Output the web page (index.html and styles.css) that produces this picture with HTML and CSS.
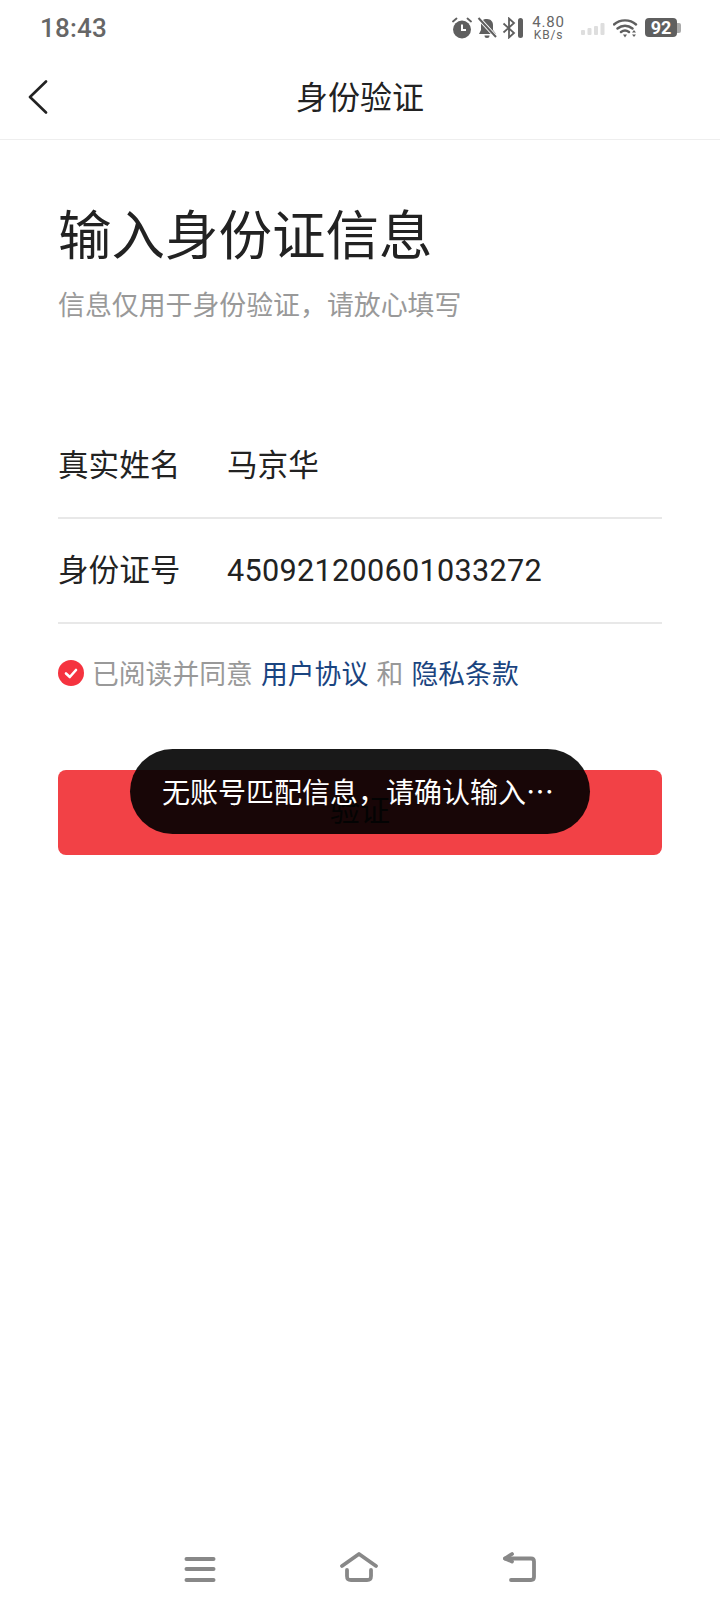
FILE: index.html
```html
<!DOCTYPE html>
<html lang="zh-CN">
<head>
    <meta charset="UTF-8">
    <meta name="viewport" content="width=device-width, initial-scale=1.0">
    <title>身份验证</title>
    <link rel="stylesheet" href="styles.css">
</head>
<body>
    <div class="screen">
        <div class="status-bar">
            <span class="clock">18:43</span>
            <div class="status-icons">
                <svg class="ic-alarm" width="20" height="22" viewBox="0 0 20 22">
                    <circle cx="10" cy="12.500" r="9" fill="#5f5f5f"/>
                    <path d="M1 4.500 4.500 1.500M19 4.500 15.500 1.500" stroke="#5f5f5f" stroke-width="1.800" stroke-linecap="round"/>
                    <path d="M10 7.500V13H14" stroke="#fff" stroke-width="2" fill="none"/>
                </svg>
                <svg class="ic-bell" width="20" height="22" viewBox="0 0 20 22">
                    <path d="M4 6.500C4 4 6 2 10 2c4 0 6 3 6 6v5l3 4H2l2-4z" fill="#5f5f5f"/>
                    <path d="M7.500 18.500a2.500 2.500 0 0 0 5 0z" fill="#5f5f5f"/>
                    <path d="M1.500 1 19 20" stroke="#fff" stroke-width="4"/>
                    <path d="M1.500 1 19 20" stroke="#5f5f5f" stroke-width="2"/>
                </svg>
                <svg class="ic-bt" width="22" height="22" viewBox="0 0 22 22">
                    <path d="M1.500 6.500 12 16 7 20.500V1.500L12 6 1.500 15.500" fill="none" stroke="#5f5f5f" stroke-width="1.800"/>
                    <rect x="16" y="1" width="5" height="20" rx="2.500" fill="#5f5f5f"/>
                </svg>
                <div class="net-speed"><span>4.80</span><span class="net-unit">KB/s</span></div>
                <svg class="ic-signal" width="24" height="12" viewBox="0 0 24 12">
                    <rect x="0" y="7" width="4" height="5" rx="1" fill="#dedede"/>
                    <rect x="6.500" y="5" width="4" height="7" rx="1" fill="#dedede"/>
                    <rect x="13" y="3" width="4" height="9" rx="1" fill="#dedede"/>
                    <rect x="19.500" y="0" width="4" height="12" rx="1" fill="#dedede"/>
                </svg>
                <svg class="ic-wifi" width="25" height="20" viewBox="0 0 25 20">
                    <path d="M1 6.500C7 1 17 1 23 6.500M4.500 10.500C9 6.800 15 6.800 19.500 10.500M8 14c2.500-2 5.500-2 8 0" fill="none" stroke="#5f5f5f" stroke-width="2.400" stroke-linecap="round"/>
                    <path d="M10 16.500h4L12 19.500z" fill="#5f5f5f"/>
                    <path d="M21 12l2 2.500h-4zM21 19l2-2.500h-4z" fill="#5f5f5f"/>
                </svg>
                <div class="battery"><span class="battery-level">92</span><span class="battery-cap"></span></div>
            </div>
        </div>

        <header class="nav-bar">
            <svg class="back-arrow" width="20" height="34" viewBox="0 0 20 34">
                <path d="M18 1.500 2 17l16 15.500" fill="none" stroke="#222" stroke-width="2.600" stroke-linecap="round" stroke-linejoin="round"/>
            </svg>
            <h2 class="nav-title">身份验证</h2>
        </header>

        <main class="content">
            <h1 class="page-title">输入身份证信息</h1>
            <p class="page-desc">信息仅用于身份验证，请放心填写</p>

            <div class="form">
                <div class="form-row">
                    <span class="form-label">真实姓名</span>
                    <span class="form-value">马京华</span>
                </div>
                <div class="form-row">
                    <span class="form-label">身份证号</span>
                    <span class="form-value form-number">450921200601033272</span>
                </div>
            </div>

            <div class="agree">
                <svg class="agree-check" width="26" height="26" viewBox="0 0 26 26">
                    <circle cx="13" cy="13" r="13" fill="#f5333f"/>
                    <path d="M8 13.500 11.800 17 18 10" fill="none" stroke="#fff" stroke-width="2.600" stroke-linecap="round" stroke-linejoin="round"/>
                </svg>
                <span class="agree-text">已阅读并同意 <a class="agree-link">用户协议</a> 和 <a class="agree-link">隐私条款</a></span>
            </div>

            <div class="submit-wrap">
                <button class="submit-btn">验证</button>
                <div class="toast">无账号匹配信息，请确认输入…</div>
            </div>
        </main>

        <nav class="sys-nav">
            <svg width="32" height="26" viewBox="0 0 32 26">
                <path d="M2.500 3h27M2.500 13h27M2.500 24h27" stroke="#888" stroke-width="4" stroke-linecap="round"/>
            </svg>
            <svg width="38" height="30" viewBox="0 0 38 30">
                <path d="M2 14 19 2l17 12" fill="none" stroke="#888" stroke-width="3.800" stroke-linecap="round" stroke-linejoin="round"/>
                <path d="M7 18v6c0 3 1 4 4 4h16c3 0 4-1 4-4v-6" fill="none" stroke="#888" stroke-width="3.800" stroke-linecap="round"/>
            </svg>
            <svg width="34" height="30" viewBox="0 0 34 30">
                <path d="M3 6.500h26c2 0 3 1 3 3V25c0 2-1 3-3 3H9" fill="none" stroke="#888" stroke-width="3.800" stroke-linecap="round"/>
                <path d="M10 2 3 6.500l7 3" fill="none" stroke="#888" stroke-width="3.800" stroke-linecap="round" stroke-linejoin="round"/>
            </svg>
        </nav>
    </div>
</body>
</html>
```

FILE: styles.css
```css
* {
    box-sizing: border-box;
    margin: 0;
    padding: 0;
}

body {
    font-family: Roboto, 'Noto Sans CJK SC', sans-serif;
    background: #fff;
    color: #222;
}

.screen {
    width: 720px;
    height: 1612px;
    display: flex;
    flex-direction: column;
    overflow: hidden;
}

/* status bar */
.status-bar {
    height: 55px;
    padding: 0 39px 0 40px;
    display: flex;
    align-items: center;
    justify-content: space-between;
}

.clock {
    font-size: 26px;
    font-weight: 500;
    letter-spacing: 0.2px;
    color: #666;
}

.status-icons {
    display: flex;
    align-items: center;
}

.ic-alarm, .ic-bell {
    margin-right: 5px;
}

.ic-bt {
    margin-right: 7px;
}

.net-speed {
    width: 35px;
    display: flex;
    flex-direction: column;
    align-items: center;
    font-size: 15px;
    line-height: 14px;
    letter-spacing: 0.8px;
    color: #666;
}

.net-unit {
    font-size: 12px;
    line-height: 12px;
}

.ic-signal {
    margin: 3px 8px 0 15px;
}

.ic-wifi {
    margin-right: 7px;
}

.battery {
    display: flex;
    align-items: center;
}

.battery-level {
    width: 32px;
    height: 19px;
    border-radius: 4px;
    background: #5f5f5f;
    color: #fff;
    font-size: 18px;
    font-weight: 700;
    line-height: 19px;
    text-align: center;
}

.battery-cap {
    width: 4px;
    height: 10px;
    border-radius: 0 2px 2px 0;
    background: #aaa;
}

/* nav */
.nav-bar {
    height: 85px;
    border-bottom: 1px solid #eee;
    position: relative;
    display: flex;
    align-items: center;
    justify-content: center;
    padding-bottom: 4px;
}

.back-arrow {
    position: absolute;
    left: 28px;
    top: 25px;
}

.nav-title {
    font-size: 32px;
    font-weight: 400;
    color: #222;
}

/* main */
.content {
    flex: 1;
    padding: 64px 58px 0;
}

.page-title {
    font-size: 53.500px;
    font-weight: 400;
    line-height: 66px;
    color: #222;
}

.page-desc {
    font-family: 'Noto Sans CJK SC', sans-serif;
    font-size: 26.900px;
    line-height: 40px;
    color: #999;
    margin-top: 14px;
}

.form {
    margin-top: 90px;
}

.form-row {
    height: 105px;
    display: flex;
    align-items: center;
    border-bottom: 2px solid #e8e8e8;
    font-size: 30.600px;
    line-height: 40px;
    color: #222;
}

.form-label {
    width: 169px;
}

.form-number {
    letter-spacing: 0.3px;
}

.agree {
    margin-top: 29px;
    display: flex;
    align-items: center;
    gap: 8px;
}

.agree-text {
    font-size: 26.800px;
    word-spacing: 1.600px;
    color: #999;
}

.agree-link {
    color: #1a4480;
}

.submit-wrap {
    position: relative;
    margin-top: 78px;
}

.submit-btn {
    display: block;
    width: 100%;
    height: 85px;
    border: none;
    border-radius: 8px;
    padding-bottom: 10px;
    background: #f24146;
    color: #222;
    font-family: inherit;
    font-size: 30px;
}

.toast {
    position: absolute;
    left: 72px;
    top: -21px;
    width: 460px;
    height: 85px;
    padding-right: 4px;
    border-radius: 43px;
    background: rgba(0, 0, 0, 0.9);
    color: #fff;
    font-family: 'Noto Sans CJK SC', sans-serif;
    font-size: 28px;
    line-height: 85px;
    text-align: center;
    white-space: nowrap;
}

/* system nav */
.sys-nav {
    height: 88px;
    padding: 0 184px 30px;
    display: flex;
    align-items: flex-end;
    justify-content: space-between;
}
```
